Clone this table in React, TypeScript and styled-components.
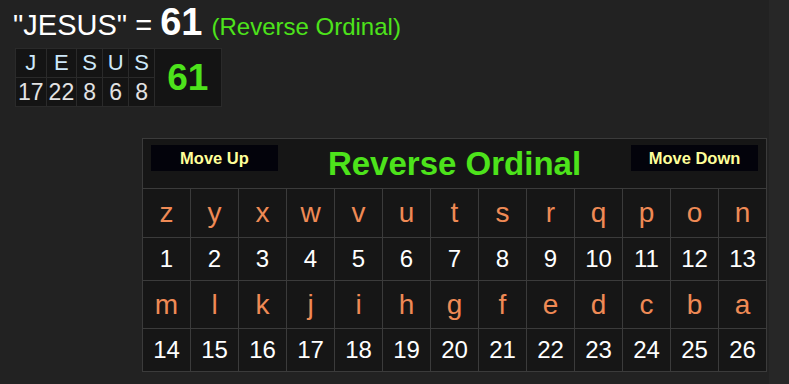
import React from 'react'
import styled, {createGlobalStyle} from 'styled-components'

const word = 'JESUS'
const values: number[] = [17, 22, 8, 6, 8]
const total: number = values.reduce((a, b) => a + b, 0)

const alphabet = 'zyxwvutsrqponmlkjihgfedcba'.split('')
const firstHalf = alphabet.slice(0, 13)
const secondHalf = alphabet.slice(13)

const GlobalStyle = createGlobalStyle`
    html, body {
        margin: 0;
        padding: 0;
        background: #272727;
    }
    body {
        font-family: "Liberation Sans", Arial, sans-serif;
    }
`

const Page = styled.div`
    width: 769px;
    min-height: 384px;
    box-sizing: border-box;
    background: #222222;
    padding: 2px 0 0 13px;
`

const Heading = styled.div`
    height: 40px;
    line-height: 40px;
    font-size: 29px;
    color: #ffffff;
    white-space: nowrap;
`

const Total = styled.span`
    font-size: 38px;
    font-weight: 700;
`

const CipherName = styled.span`
    font-size: 24px;
    color: #4de31b;
    margin-left: 1px;
`

const WordTable = styled.table`
    border-collapse: collapse;
    margin: 6px 0 0 2px;
    background: #141414;
`

const WordCell = styled.td<{$top?: boolean}>`
    border: 1px solid #2a2a2a;
    height: 29px;
    width: 26px;
    padding: 0 2px;
    box-sizing: border-box;
    text-align: center;
    line-height: 1;
    font-size: ${props => props.$top ? '22px' : '23px'};
    color: ${props => props.$top ? '#cde8fa' : '#e2e2e2'};
`

const SumCell = styled.td`
    border: 1px solid #2a2a2a;
    padding: 0 13px 0 12px;
    text-align: center;
    font-size: 37px;
    font-weight: 700;
    color: #4de31b;
`

const ChartRow = styled.div`
    display: flex;
    justify-content: flex-end;
    padding-right: 2px;
    margin-top: 31px;
`

const Chart = styled.div`
    display: grid;
    grid-template-columns: repeat(13, 47px);
    grid-template-rows: 49px 48px 42px 47px 42px;
    gap: 1px;
    padding: 1px;
    background: #3b3b3b;
`

const TitleBar = styled.div`
    grid-column: 1 / -1;
    background: #161616;
    display: flex;
    align-items: flex-start;
    justify-content: space-between;
    padding: 6px 8px 0 8px;
`

const NavButton = styled.button`
    width: 127px;
    height: 26px;
    border: none;
    padding: 0;
    background: #03030b;
    color: #ffff99;
    font-family: "Liberation Sans", Arial, sans-serif;
    font-size: 16.5px;
    font-weight: 700;
    line-height: 26px;
    cursor: pointer;
`

const Title = styled.div`
    align-self: center;
    margin-top: -6px;
    font-size: 33px;
    font-weight: 700;
    line-height: 36px;
    color: #4de31b;
`

const Cell = styled.div<{$letter?: boolean}>`
    background: #161616;
    display: flex;
    align-items: center;
    justify-content: center;
    font-size: ${props => props.$letter ? '28px' : '24px'};
    color: ${props => props.$letter ? '#ef8a55' : '#ffffff'};
`

function App() {
    const renderHalf = (letters: string[], offset: number) => (
        <>
            {letters.map(l => <Cell key={'l' + l} $letter>{l}</Cell>)}
            {letters.map((l, i) => <Cell key={'n' + l}>{offset + i + 1}</Cell>)}
        </>
    )

    return (
        <Page>
            <GlobalStyle />
            <Heading>
                "{word}" = <Total>{total}</Total> <CipherName>(Reverse Ordinal)</CipherName>
            </Heading>
            <WordTable>
                <tbody>
                    <tr>
                        {word.split('').map((c, i) => <WordCell key={i} $top>{c}</WordCell>)}
                        <SumCell rowSpan={2}>{total}</SumCell>
                    </tr>
                    <tr>
                        {values.map((v, i) => <WordCell key={i}>{v}</WordCell>)}
                    </tr>
                </tbody>
            </WordTable>
            <ChartRow>
                <Chart>
                    <TitleBar>
                        <NavButton>Move Up</NavButton>
                        <Title>Reverse Ordinal</Title>
                        <NavButton>Move Down</NavButton>
                    </TitleBar>
                    {renderHalf(firstHalf, 0)}
                    {renderHalf(secondHalf, 13)}
                </Chart>
            </ChartRow>
        </Page>
    )
}

export default App
